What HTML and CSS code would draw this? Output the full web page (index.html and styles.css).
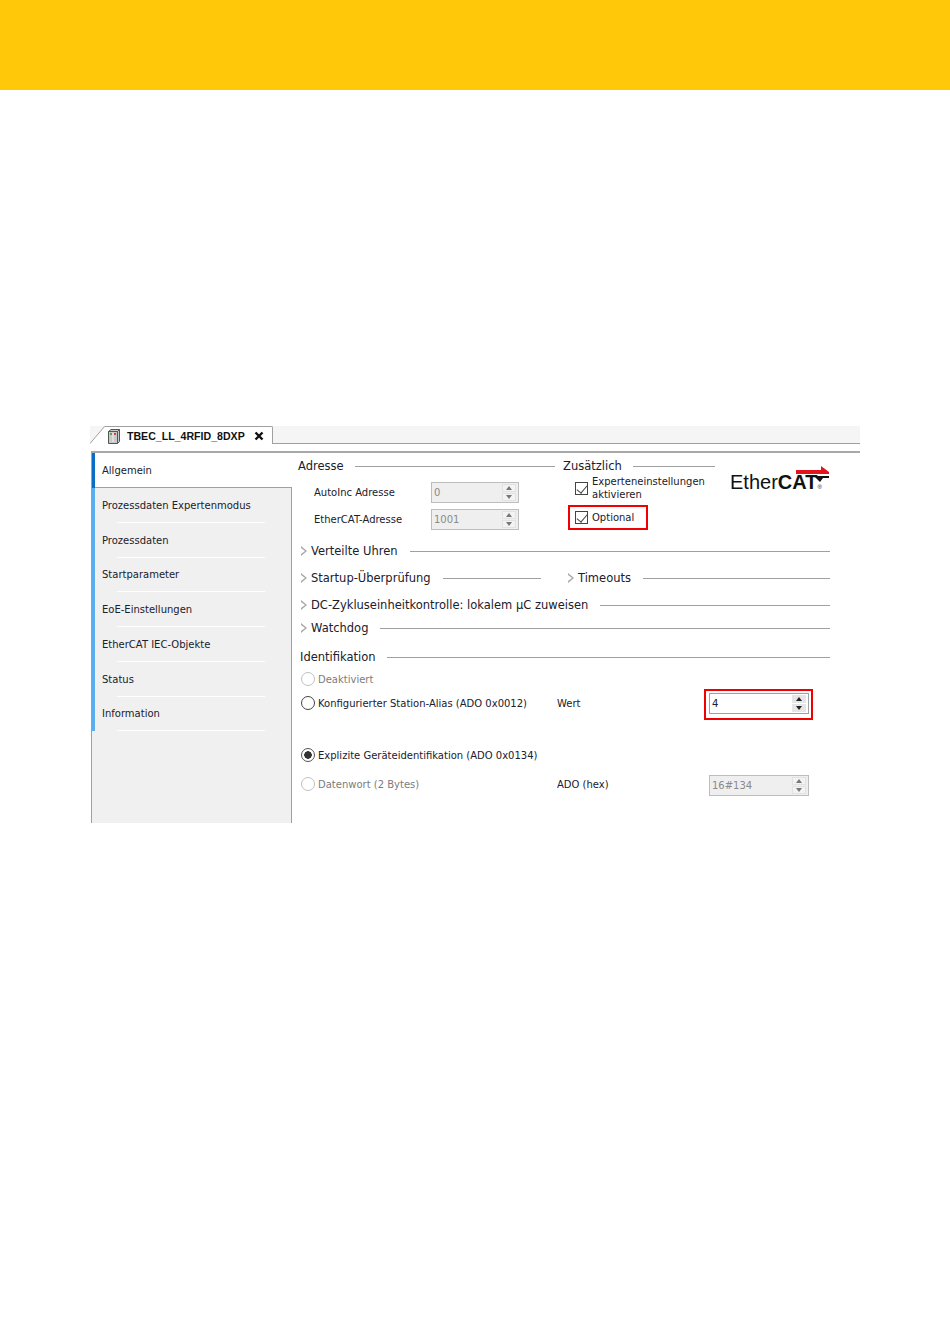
FILE: index.html
```html
<!DOCTYPE html>
<html lang="de">
<head>
    <meta charset="UTF-8">
    <meta name="viewport" content="width=device-width, initial-scale=1.0">
    <title>EtherCAT Allgemein</title>
    <link rel="stylesheet" href="styles.css">
</head>
<body>
    <div class="banner"></div>

    <div class="figure">
        <div class="tab-strip">
            <svg class="tab-slant" width="15" height="18" viewBox="0 0 15 18"><path d="M0 17.5 L14.5 .5 H15 V18 H0 Z" fill="#fff"/><path d="M0 17.5 L14.5 .5 H15" fill="none" stroke="#a0a0a0"/></svg>
            <div class="tab">
                <svg class="tab-icon" width="14" height="16" viewBox="0 0 14 16">
                    <path d="M1.5 3.5 L4 1.5 H12.5 V13.5 L10.5 15.5 H1.5 Z" fill="#c9c9c9" stroke="#555"/>
                    <path d="M10.5 3.5 H1.5 M10.5 3.5 V15.5 M10.5 3.5 L12.5 1.5" fill="none" stroke="#555"/>
                    <rect x="3" y="5" width="2" height="2" fill="#3fae49"/>
                    <rect x="7" y="5" width="2" height="2" fill="#e03c31"/>
                    <rect x="5.5" y="5" width="1" height="9" fill="#f4f4f4"/>
                </svg>
                <span class="tab-title">TBEC_LL_4RFID_8DXP</span>
                <svg class="tab-close" width="10" height="10" viewBox="0 0 10 10"><path d="M1.5 1.5 L8.5 8.5 M8.5 1.5 L1.5 8.5" stroke="#111" stroke-width="2.4"/></svg>
            </div>
        </div>

        <div class="editor">
            <ul class="side-nav">
                <li class="side-item active"><span>Allgemein</span></li>
                <li class="side-item"><span>Prozessdaten Expertenmodus</span></li>
                <li class="side-item"><span>Prozessdaten</span></li>
                <li class="side-item"><span>Startparameter</span></li>
                <li class="side-item"><span>EoE-Einstellungen</span></li>
                <li class="side-item"><span>EtherCAT IEC-Objekte</span></li>
                <li class="side-item"><span>Status</span></li>
                <li class="side-item"><span>Information</span></li>
            </ul>

            <div class="pane">
                <div class="top-area">
                    <div class="address-col">
                        <div class="group-head"><span>Adresse</span><i class="rule"></i></div>
                        <div class="field-row">
                            <label class="field-label">AutoInc Adresse</label>
                            <div class="spinner disabled"><span class="spin-value">0</span><div class="spin-btns"><b class="up"></b><b class="down"></b></div></div>
                        </div>
                        <div class="field-row">
                            <label class="field-label">EtherCAT-Adresse</label>
                            <div class="spinner disabled"><span class="spin-value">1001</span><div class="spin-btns"><b class="up"></b><b class="down"></b></div></div>
                        </div>
                    </div>

                    <div class="extra-col">
                        <div class="group-head"><span>Zusätzlich</span><i class="rule"></i></div>
                        <div class="check-row expert">
                            <span class="checkbox"></span>
                            <span class="check-text">Experteneinstellungen<br>aktivieren</span>
                        </div>
                        <div class="check-row optional">
                            <span class="checkbox"></span>
                            <span class="check-text">Optional</span>
                        </div>
                    </div>

                    <div class="logo">
                        <span class="logo-ether">Ether</span><span class="logo-cat">CAT</span><span class="logo-reg">®</span>
                        <svg class="logo-arrows" width="34" height="16" viewBox="0 0 34 16">
                            <path d="M0 4 H25 V0 L33 6 V8 H0 Z" fill="#e2131b"/>
                            <path d="M18 10 H33 V12 H27 L24 16 Z" fill="#111"/>
                        </svg>
                    </div>
                </div>

                <div class="rows">
                    <div class="sect-head"><i class="arrow"></i><span>Verteilte Uhren</span><i class="rule"></i></div>
                    <div class="sect-split">
                        <div class="sect-head startup"><i class="arrow"></i><span>Startup-Überprüfung</span><i class="rule"></i></div>
                        <div class="sect-head timeouts"><i class="arrow"></i><span>Timeouts</span><i class="rule"></i></div>
                    </div>
                    <div class="sect-head"><i class="arrow"></i><span>DC-Zykluseinheitkontrolle: lokalem µC zuweisen</span><i class="rule"></i></div>
                    <div class="sect-head"><i class="arrow"></i><span>Watchdog</span><i class="rule"></i></div>
                    <div class="group-head ident"><span>Identifikation</span><i class="rule"></i></div>

                    <div class="radio-row disabled"><span class="radio"></span><span class="radio-text">Deaktiviert</span></div>
                    <div class="radio-row">
                        <span class="radio"></span><span class="radio-text">Konfigurierter Station-Alias (ADO 0x0012)</span>
                        <span class="value-label">Wert</span>
                        <div class="marked">
                            <div class="spinner"><span class="spin-value">4</span><div class="spin-btns"><b class="up"></b><b class="down"></b></div></div>
                        </div>
                    </div>
                    <div class="radio-row"><span class="radio checked"></span><span class="radio-text">Explizite Geräteidentifikation (ADO 0x0134)</span></div>
                    <div class="radio-row disabled">
                        <span class="radio"></span><span class="radio-text">Datenwort (2 Bytes)</span>
                        <span class="value-label">ADO (hex)</span>
                        <div class="spinner disabled"><span class="spin-value">16#134</span><div class="spin-btns"><b class="up"></b><b class="down"></b></div></div>
                    </div>
                </div>
            </div>
        </div>
    </div>
</body>
</html>
```

FILE: styles.css
```css
* {
    margin: 0;
    padding: 0;
    box-sizing: border-box;
}

body {
    font-family: "DejaVu Sans", sans-serif;
    font-size: 10px;
    color: #20202c;
    background: white;
    min-height: 1344px;
}

.banner {
    height: 90px;
    background: #ffc90a;
}

.figure {
    width: 770px;
    margin: 336px 0 0 90px;
}

/* tab strip */
.tab-strip {
    display: flex;
    height: 18px;
    background: #f5f5f5;
    border-bottom: 1px solid #a0a0a0;
}

.tab-slant {
    flex: none;
}

.tab {
    display: flex;
    align-items: center;
    width: 168px;
    height: 18px;
    padding-left: 2px;
    background: white;
    border-top: 1px solid #a0a0a0;
    border-right: 1px solid #a0a0a0;
    border-top-right-radius: 2px;
}

.tab-title {
    margin-left: 6px;
    font-family: "Liberation Sans", sans-serif;
    font-size: 10.6px;
    font-weight: bold;
    color: #111;
    white-space: nowrap;
}

.tab-close {
    margin-left: 9px;
}

/* editor */
.editor {
    display: flex;
    height: 372px;
    margin-top: 7px;
    margin-left: 1px;
    border-top: 2px solid #a8a8a8;
    background: white;
}

.side-nav {
    flex: none;
    width: 201px;
    list-style: none;
    background: #f0f0f0;
    border-left: 1px solid #a0a0a0;
    border-right: 1px solid #a0a0a0;
}

.side-item {
    display: flex;
    align-items: center;
    height: 34.75px;
    padding-left: 7px;
    border-left: 3px solid #5aaef0;
    white-space: nowrap;
}

.side-item span {
    display: block;
}

.side-item::after {
    content: "";
    position: absolute;
}

.side-item:not(.active) {
    background: linear-gradient(white, white) 22px bottom / 148px 1px no-repeat;
}

.side-item.active {
    position: relative;
    height: 35px;
    margin-right: -1px;
    background: white;
    border-left-color: #0a6fc4;
    box-shadow: inset 0 -1px 0 #a0a0a0;
}

/* right pane */
.pane {
    flex: 1;
    padding-left: 6px;
    padding-right: 30px;
    font-size: 10px;
}

.top-area {
    display: flex;
    height: 88px;
    padding-top: 5px;
}

.address-col {
    flex: none;
    width: 257px;
}

.extra-col {
    flex: none;
    width: 152px;
    margin-left: 8px;
}

.rule {
    flex: 1;
    height: 1px;
    background: #a0a0a0;
}

.group-head {
    display: flex;
    align-items: center;
    height: 16px;
    font-size: 11.5px;
    white-space: nowrap;
}

.group-head .rule {
    margin-left: 11px;
}

.field-row {
    display: flex;
    align-items: center;
    height: 27px;
    padding-left: 16px;
}

.address-col .field-row:nth-child(2) {
    margin-top: 5px;
}

.field-label {
    flex: none;
    width: 117px;
    white-space: nowrap;
}

.spinner {
    display: flex;
    align-items: center;
    justify-content: space-between;
    flex: none;
    width: 100px;
    height: 21px;
    padding: 0 2px;
    background: white;
    border: 1px solid #a0a0a8;
}

.field-row .spinner {
    width: 88px;
}

.spinner.disabled {
    background: #efefef;
    border-color: #bdbdbd;
    color: #8a8a8a;
}

.spin-btns {
    display: flex;
    flex-direction: column;
    width: 14px;
    height: 17px;
    gap: 1px;
}

.spin-btns b {
    display: flex;
    align-items: center;
    justify-content: center;
    flex: 1;
    background: #e6e6e6;
}

.spin-btns b::after {
    content: "";
    border-left: 3px solid transparent;
    border-right: 3px solid transparent;
}

.spin-btns .up::after {
    border-bottom: 4px solid #222;
}

.spin-btns .down::after {
    border-top: 4px solid #222;
}

.spinner.disabled .spin-btns b {
    background: #f3f3f3;
    box-shadow: inset 0 0 0 1px #e2e2e2;
}

.spinner.disabled .up::after {
    border-bottom-color: #777;
}

.spinner.disabled .down::after {
    border-top-color: #777;
}

.check-row {
    display: flex;
    align-items: center;
    white-space: nowrap;
}

.expert {
    height: 26px;
    margin-top: 1px;
    margin-left: 12px;
    line-height: 13px;
}

.optional {
    width: 80px;
    height: 25px;
    margin-top: 4px;
    margin-left: 5px;
    padding-left: 5px;
    border: 2px solid #f00000;
}

.checkbox {
    position: relative;
    flex: none;
    width: 13px;
    height: 13px;
    margin-right: 4px;
    background: white;
    border: 1px solid #444;
}

.checkbox::after {
    content: "";
    position: absolute;
    left: 3px;
    top: 0;
    width: 5px;
    height: 9px;
    border-right: 1.5px solid #444;
    border-bottom: 1.5px solid #444;
    transform: rotate(40deg);
}

.logo {
    position: relative;
    flex: none;
    width: 100px;
    height: 26px;
    margin-top: 8px;
    margin-left: 15px;
    font-family: "Liberation Sans", sans-serif;
    color: #111;
    white-space: nowrap;
}

.logo-ether {
    font-size: 20px;
    line-height: 32px;
}

.logo-cat {
    font-size: 20px;
    font-weight: bold;
    line-height: 32px;
}

.logo-reg {
    font-size: 6px;
}

.logo-arrows {
    position: absolute;
    top: 0;
    right: 0;
}

/* stacked rows below the top area */
.rows {
    display: grid;
    grid-template-rows: 27px 27px 23px 29px 22px 24px 52px 29px 20px;
    align-items: start;
}

.sect-head {
    display: flex;
    align-items: center;
    height: 20px;
    font-size: 11.5px;
    white-space: nowrap;
}

.sect-head .rule {
    margin-left: 12px;
}

.arrow {
    flex: none;
    width: 0;
    height: 0;
    margin: 0 4px 0 3px;
    position: relative;
    border-left: 6px solid #a8a8a8;
    border-top: 5px solid transparent;
    border-bottom: 5px solid transparent;
}

.arrow::after {
    content: "";
    position: absolute;
    left: -6px;
    top: -3.5px;
    border-left: 4px solid white;
    border-top: 3.5px solid transparent;
    border-bottom: 3.5px solid transparent;
}

.sect-split {
    display: flex;
}

.startup {
    flex: none;
    width: 243px;
}

.timeouts {
    flex: 1;
    margin-left: 24px;
}

.group-head.ident {
    height: 20px;
    padding-left: 2px;
}

.radio-row {
    display: flex;
    align-items: center;
    height: 20px;
    padding-left: 3px;
    white-space: nowrap;
}

.radio {
    flex: none;
    width: 14px;
    height: 14px;
    margin-right: 3px;
    background: white;
    border: 1px solid #444;
    border-radius: 50%;
}

.radio.checked {
    border: 1px solid #555;
    background: radial-gradient(circle, #333 0 3.5px, white 4px);
}

.radio-row.disabled .radio {
    border-color: #c0c0c0;
}

.radio-row.disabled .radio-text {
    color: #7c7c7c;
}

.radio-text {
    flex: none;
    width: 239px;
}

.value-label {
    flex: none;
    width: 152px;
    color: #20202c;
}

.marked {
    flex: none;
    margin: -4px -4px -6px -5px;
    padding: 2px 2px 4px 3px;
    border: 2px solid #f00000;
}

.radio-row .spinner {
    margin-top: 3px;
}

.marked .spinner {
    margin-top: 0;
}
```
